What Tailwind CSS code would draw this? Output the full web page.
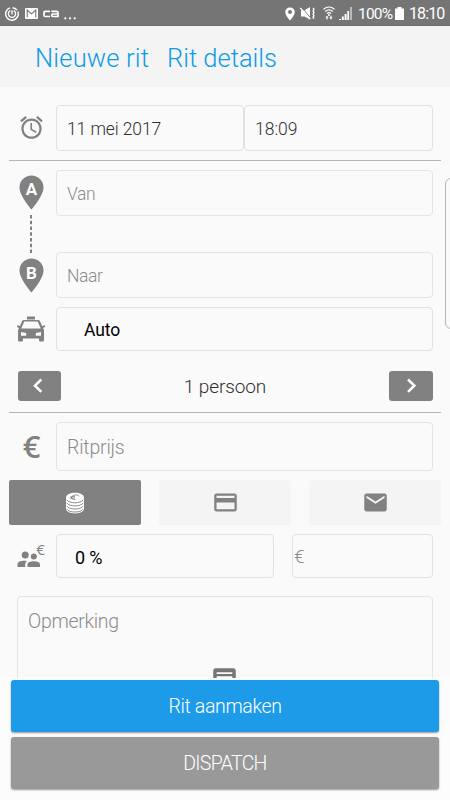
<!DOCTYPE html>
<html lang="nl">
<head>
<meta charset="utf-8">
<title>Nieuwe rit</title>
<script src="https://cdn.jsdelivr.net/npm/@tailwindcss/browser@4"></script>
</head>
<body class="h-[800px] w-[450px] overflow-hidden bg-[#fafafa] font-['Roboto','Noto_Sans',sans-serif] font-light text-[#303030]">
<div class="relative flex h-full flex-col">
  <!-- status bar -->
  <div class="flex h-[26px] shrink-0 items-center border-b border-[#6c6c6c] bg-[#757575] pl-[5px] pr-[6px] font-normal text-white">
    <svg class="mt-[2px] h-[14px] w-[14px]" viewBox="0 0 14 14" fill="none" stroke="#fff" stroke-width="1.4"><path d="M5 .9A6.3 6.3 0 1 0 12.8 4.5M7.5.7A6.3 6.3 0 0 1 12 3.2"/><path d="M5.2 3.7A3.6 3.6 0 1 0 8.8 3.7M7 3.3v4.2"/></svg>
    <svg class="ml-[6px] mt-[2px] h-[11px] w-[13px]" viewBox="0 0 13 11"><rect width="13" height="11" rx="1" fill="#fff"/><path d="M2.2 9.600V2l4.300 3.800L10.800 2v7.600" fill="none" stroke="#757575" stroke-width="1.100"/></svg>
    <svg class="ml-[5px] mt-[2px] h-[8px] w-[16px]" viewBox="0 0 16 8" fill="none" stroke="#fff" stroke-width="1.7"><path d="M7 1.3H2.2Q1 1.3 1 2.5v2.8q0 1.2 1.2 1.2H7M8.3 1.3h5.2q1.5 0 1.5 1.5v3.7H9.8Q8.7 6.5 8.7 5.3T9.8 4H15"/></svg>
    <svg class="ml-[5px] mt-[12px] h-[3px] w-[12px]" viewBox="0 0 12 3" fill="#fff"><circle cx="1.3" cy="1.3" r="1.1"/><circle cx="6" cy="1.3" r="1.1"/><circle cx="10.7" cy="1.3" r="1.1"/></svg>
    <div class="ml-auto flex items-center">
      <svg class="mt-[2px] h-[14px] w-[10px]" viewBox="0 0 10 14"><path fill="#fff" fill-rule="evenodd" d="M5 .4A4.7 4.7 0 0 0 .2 5C.2 8.500 5 13.600 5 13.600S9.800 8.500 9.800 5A4.700 4.700 0 0 0 5 .4Zm0 2.700a2 2 0 1 1 0 4 2 2 0 0 1 0-4Z"/></svg>
      <svg class="ml-[5px] mt-[1px] h-[13px] w-[15px]" viewBox="0 0 15 13" fill="none" stroke="#fff"><path fill="#fff" stroke="none" d="M1 3.500h3L10 0v12.500L4.500 9.500H1Z"/><path d="M1.500.3l9.500 11" stroke="#757575" stroke-width="1"/><path d="M.3 1l10 11" stroke-width="1.200"/><path stroke-width="1.300" d="M13 .8l1 1.500-1 1.600 1 1.600-1 1.600 1 1.600-1 1.600 1 1.500"/></svg>
      <svg class="ml-[8px] mt-[1px] h-[14px] w-[12px]" viewBox="0 0 12 14" fill="none" stroke="#fff" stroke-width="1.200"><path d="M.5 3.300Q6-1.300 11.500 3.300M2.200 5.500Q6 2.200 9.800 5.500M4 7.500q2-1.600 4 0"/><path fill="#fff" stroke="none" d="M5 8.200h2V9.700H5ZM2.300 11.500 4 9.700l1.700 1.800H4.600v2H3.400v-2ZM9.700 11.500 8 13.500l-1.700-2h1.100V9.700h1.200v1.800Z"/></svg>
      <svg class="ml-[4px] mt-[1px] h-[13px] w-[13px]" viewBox="0 0 13 13" fill="#fff"><path d="M0 12h2v1H0ZM2.800 9.500h2V13h-2ZM5.600 7h2v6h-2ZM8.300 4h1.800v9H8.300Z"/><path opacity=".5" d="M11 0h2v13h-2Z"/></svg>
      <span class="ml-[6px] mt-[2px] w-[34px] whitespace-nowrap text-[15.500px] leading-[26px] tracking-[-0.800px]">100%</span>
      <svg class="ml-[3px] mt-[1px] h-[13px] w-[9px]" viewBox="0 0 9 13" fill="#fff"><path d="M2.500 0h4v1.500H9V13H0V1.500h2.500Z"/></svg>
      <span class="ml-[5px] mt-[2px] w-[35px] whitespace-nowrap text-[16px] leading-[26px] tracking-[-0.900px]">18:10</span>
    </div>
  </div>
  <!-- tabs -->
  <header class="flex h-[61px] shrink-0 items-center gap-[18px] bg-[#f4f4f4] pl-[35px] pt-[4px] text-[25.500px] text-[#0c9be6]">
    <span class="w-[114px] whitespace-nowrap tracking-[0.200px]">Nieuwe rit</span><span class="whitespace-nowrap">Rit details</span>
  </header>
  <main class="flex min-h-0 flex-1 flex-col overflow-hidden pt-[18px]">
    <!-- pickup date and time -->
    <div class="flex h-[46px] shrink-0 items-center pl-[18px] pr-[17px]">
      <svg class="mr-[11px] -mt-[2px] h-[27px] w-[27px]" viewBox="0 0 24 24" fill="#818181"><path d="M22 5.720l-4.600-3.860-1.290 1.530 4.600 3.860L22 5.720zM7.880 3.390L6.600 1.860 2 5.710l1.290 1.530 4.590-3.850zM12.500 8H11v6l4.750 2.850.75-1.230-4-2.370V8zM12 4c-4.970 0-9 4.030-9 9s4.020 9 9 9c4.970 0 9-4.030 9-9s-4.030-9-9-9zm0 16c-3.870 0-7-3.130-7-7s3.130-7 7-7 7 3.130 7 7-3.130 7-7 7z"/></svg>
      <div class="flex h-full w-[188px] items-center rounded-[4px] border border-[#e1e1e1] pl-[10px] pt-[2px] text-[17.500px] tracking-[-0.100px]">11 mei 2017</div>
      <div class="flex h-full flex-1 items-center rounded-[4px] border border-[#e1e1e1] pl-[10px] pt-[2px] text-[17.500px]">18:09</div>
    </div>
    <div class="mx-[9px] mt-[9px] h-px shrink-0 bg-[#b5b5b5]"></div>
    <!-- route -->
    <div class="mt-[9px] flex h-[128px] shrink-0 pl-[18px] pr-[17px]">
      <div class="mr-[12px] flex w-[26px] flex-col items-center pt-[5px]">
        <svg class="h-[35px] w-[25px] shrink-0" viewBox="0 0 25 35"><path fill="#818181" d="M12.500.5A12 12 0 0 0 .5 12.500C.5 21 12.500 34.500 12.500 34.500S24.500 21 24.500 12.500A12 12 0 0 0 12.500.5Z"/><text x="12.500" y="20" text-anchor="middle" font-family="Roboto" font-weight="700" font-size="17" fill="#fff">A</text></svg>
        <svg class="my-[5px] h-[38px] w-[2px] shrink-0" viewBox="0 0 2 38"><path d="M1 0v38" stroke="#818181" stroke-width="2" stroke-dasharray="3.500 2.250"/></svg>
        <svg class="h-[35px] w-[25px] shrink-0" viewBox="0 0 25 35"><path fill="#818181" d="M12.500.5A12 12 0 0 0 .5 12.500C.5 21 12.500 34.500 12.500 34.500S24.500 21 24.500 12.500A12 12 0 0 0 12.500.5Z"/><text x="12.500" y="20.500" text-anchor="middle" font-family="Roboto" font-weight="700" font-size="17" fill="#fff">B</text></svg>
      </div>
      <div class="flex flex-1 flex-col justify-between text-[17.500px] tracking-[-0.400px] text-[#8c8c8c]">
        <div class="flex h-[46px] items-center rounded-[4px] border border-[#e4e4e4] pl-[10px] pt-[2px]">Van</div>
        <div class="flex h-[46px] items-center rounded-[4px] border border-[#e4e4e4] pl-[10px] pt-[2px]">Naar</div>
      </div>
    </div>
    <!-- vehicle -->
    <div class="mt-[9px] flex h-[44px] shrink-0 items-center pl-[17px] pr-[17px]">
      <svg class="mr-[11px] h-[26px] w-[28px]" viewBox="0 0 28 26" fill="#818181"><path d="M10 .5h8v3h-8Z"/><path fill-rule="evenodd" d="M7 4h14q1.500 0 2 1.300L25 10l3-.7v1.700l-2 .9 1 2.100V24q0 1.500-1.300 1.500h-2.400q-1.300 0-1.300-1.500v-1.500H6V24q0 1.500-1.300 1.500H2.300Q1 25.500 1 24V14l1-2.100-2-.9V9.300l3 .7 2-4.700Q5.500 4 7 4ZM7.300 5.500 4.300 12.500h19.400l-3-7ZM4 16v3.700h5.200v-2.700ZM24 16l-5.200 1v2.700H24Z"/></svg>
      <div class="flex h-full flex-1 items-center rounded-[4px] border border-[#e1e1e1] pl-[27px] pt-[3px] text-[17.500px] font-normal tracking-[-0.100px] text-black">Auto</div>
    </div>
    <!-- passengers -->
    <div class="mt-[20px] flex h-[30px] shrink-0 items-center justify-between pl-[18px] pr-[17px]">
      <div class="flex h-[30px] w-[43px] items-center justify-center rounded-[3px] bg-[#818181]"><svg class="-ml-[3px] h-[16px] w-[10px]" viewBox="0 0 10 16" fill="none" stroke="#fff" stroke-width="2.500"><path d="M8.300 1.500 2 7.700l6.300 6.200"/></svg></div>
      <span class="whitespace-nowrap pt-[2px] text-[19px] tracking-[-0.100px]">1 persoon</span>
      <div class="flex h-[30px] w-[44px] items-center justify-center rounded-[3px] bg-[#818181]"><svg class="h-[16px] w-[10px]" viewBox="0 0 10 16" fill="none" stroke="#fff" stroke-width="2.500"><path d="M2 1.500l6.300 6.200L2 13.900"/></svg></div>
    </div>
    <div class="mx-[9px] mt-[11px] h-px shrink-0 bg-[#b5b5b5]"></div>
    <!-- price -->
    <div class="mt-[9px] flex h-[49px] shrink-0 items-center pl-[18px] pr-[17px]">
      <span class="mr-[11px] w-[27px] text-center font-['Open_Sans',sans-serif] text-[31px] font-semibold leading-none text-[#818181]">€</span>
      <div class="flex h-full flex-1 items-center rounded-[4px] border border-[#e4e4e4] pl-[10px] pt-[2px] text-[19.500px] tracking-[-0.200px] text-[#8c8c8c]">Ritprijs</div>
    </div>
    <!-- payment method -->
    <div class="mx-[9px] mt-[9px] grid h-[45px] shrink-0 grid-cols-3 gap-[18px]">
      <div class="flex items-center justify-center rounded-[2px] bg-[#818181]">
        <svg class="h-[22px] w-[20px]" viewBox="0 0 20 22"><path fill="#fff" d="M1 5.500C1-1 19-1 19 5.500V16.500C19 23 1 23 1 16.500Z"/><g fill="none" stroke="#818181" stroke-width=".9"><path d="M1.800 7.800c2 4 14.400 4 16.400 0M1.800 10.900c2 4 14.400 4 16.400 0M1.800 14c2 4 14.400 4 16.400 0M1.800 17c2 4 14.400 4 16.400 0"/><path d="M14 4.300c-1-2-6-1.800-7.500.7-.5 2 2 2.700 4 2.300M5 5.300l5-1.100M5.500 6.700l4.500-1"/></g></svg>
      </div>
      <div class="flex items-center justify-center rounded-[2px] bg-[#f4f4f4]">
        <svg class="h-[27px] w-[27px]" viewBox="0 0 24 24" fill="#818181"><path d="M20 4H4c-1.110 0-1.990.89-1.990 2L2 18c0 1.110.89 2 2 2h16c1.110 0 2-.89 2-2V6c0-1.110-.89-2-2-2zm0 14H4v-6h16v6zm0-10H4V6h16v2z"/></svg>
      </div>
      <div class="flex items-center justify-center rounded-[2px] bg-[#f4f4f4]">
        <svg class="h-[27px] w-[27px]" viewBox="0 0 24 24" fill="#818181"><path d="M20 4H4c-1.100 0-1.990.9-1.990 2L2 18c0 1.100.9 2 2 2h16c1.100 0 2-.9 2-2V6c0-1.100-.9-2-2-2zm0 4l-8 5-8-5V6l8 5 8-5v2z"/></svg>
      </div>
    </div>
    <!-- commission -->
    <div class="mt-[9px] flex h-[44px] shrink-0 items-center pl-[17px] pr-[17px]">
      <svg class="mr-[11px] mt-[1px] h-[25px] w-[28px] overflow-visible" viewBox="0 0 28 25" fill="#818181"><circle cx="8.200" cy="11" r="3.500"/><circle cx="16.800" cy="12.500" r="3"/><path d="M.5 23v-2.800c0-3.200 6-4.200 9.500-3-1.300 1-1.800 2-1.800 3.300V23ZM10.500 23v-2.500c0-4.200 12.500-4.200 12.500 0V23Z"/><text x="19.300" y="11" font-family="Open Sans" font-size="15" font-weight="400">€</text></svg>
      <div class="flex h-full w-[218px] items-center rounded-[4px] border border-[#e1e1e1] pl-[18px] pt-[2px] text-[18px] font-normal tracking-[-0.200px] text-black">0 %</div>
      <div class="ml-[18px] flex h-full flex-1 items-center rounded-[4px] border border-[#e1e1e1] pl-[1px] pt-[3px] text-[19px] text-[#8c8c8c]">€</div>
    </div>
    <!-- remarks -->
    <div class="ml-[17px] mr-[17px] mt-[18px] flex h-[120px] shrink-0 flex-col rounded-[4px] border border-[#e4e4e4] pl-[10px] pt-[12px] text-[19.500px] tracking-[-0.300px] text-[#8c8c8c]">
      <span class="leading-[26px]">Opmerking</span>
      <svg class="ml-[183px] mt-[31px] h-[27px] w-[27px]" viewBox="0 0 24 24" fill="#757575"><path fill-rule="evenodd" d="M20 2H4c-1.100 0-2 .9-2 2v18l4-4h14c1.100 0 2-.9 2-2V4c0-1.100-.9-2-2-2ZM5 5.500h14V7H5ZM5 9h14v2H5Z"/></svg>
    </div>
  </main>
  <!-- edge panel handle -->
  <div class="absolute left-[445px] top-[178px] h-[151px] w-[12px] rounded-[8px] border border-[#b5b5b5] bg-[#fafafa]"></div>
  <!-- actions -->
  <footer class="flex h-[122px] shrink-0 flex-col gap-[5px] bg-[#fcfcfc] px-[11px] pt-[2px] text-[19.500px] text-white">
    <div class="flex h-[52px] items-center justify-center rounded-[3px] bg-[#1e9be8] pt-[2px] tracking-[-0.350px] shadow-[0_1px_2px_rgba(0,0,0,0.4)]">Rit aanmaken</div>
    <div class="flex h-[52px] items-center justify-center rounded-[3px] bg-[#999999] pt-[2px] tracking-[-0.700px] shadow-[0_1px_2px_rgba(0,0,0,0.4)]">DISPATCH</div>
  </footer>
</div>
</body>
</html>
